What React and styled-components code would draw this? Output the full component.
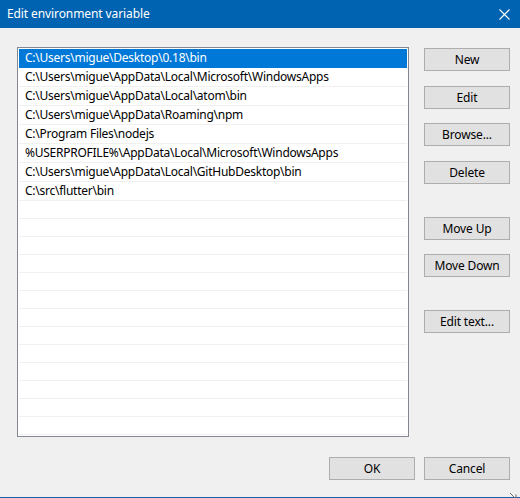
import React from 'react'
import styled, { createGlobalStyle } from 'styled-components'

const GlobalStyle = createGlobalStyle`
    html, body {
        margin: 0;
        padding: 0;
        background: #f0f0f0;
        overflow: hidden;
    }
    * {
        box-sizing: border-box;
    }
`;

const Window = styled.div`
    position: relative;
    display: flex;
    flex-direction: column;
    width: 520px;
    height: 498px;
    background: #f0f0f0;
    border-bottom: 1px solid #1a5fa8;
    font-family: "Noto Sans", "Open Sans", sans-serif;
    font-size: 12px;
    color: #000;
`;

const TitleBar = styled.div`
    display: flex;
    align-items: center;
    justify-content: space-between;
    height: 28px;
    padding: 0 6px 0 7px;
    background: #0063b1;
    color: white;
    flex-shrink: 0;
`;

const Title = styled.span`
    font-size: 12px;
    line-height: 28px;
    letter-spacing: -0.1px;
`;

const CloseBox = styled.div`
    display: flex;
    align-items: center;
    justify-content: center;
    width: 20px;
    height: 28px;
`;

const Body = styled.div`
    display: flex;
    flex-direction: column;
    flex: 1;
    padding: 19px 10px 0 17px;
`;

const Main = styled.div`
    display: flex;
    flex-direction: row;
`;

const ListBox = styled.div`
    display: flex;
    flex-direction: column;
    width: 392px;
    height: 390px;
    padding: 1px;
    background: white;
    border: 1px solid #828790;
    overflow: hidden;
`;

const Row = styled.div`
    height: 19px;
    padding: 0 0 0 6px;
    line-height: 18px;
    letter-spacing: -0.25px;
    border-bottom: 1px solid #f0f0f0;
    white-space: nowrap;
    background: ${p => (p.selected ? '#0078d7' : 'white')};
    color: ${p => (p.selected ? 'white' : '#000')};
    border-bottom-color: ${p => (p.selected ? '#0078d7' : '#f0f0f0')};
`;

const SideButtons = styled.div`
    display: flex;
    flex-direction: column;
    margin-left: 15px;
    padding-top: 1px;
`;

const Button = styled.button`
    width: 86px;
    height: 23px;
    margin-top: ${p => p.gap || 0}px;
    padding: 0;
    background: #e1e1e1;
    border: 1px solid #adadad;
    border-radius: 0;
    font-family: inherit;
    font-size: 12px;
    letter-spacing: -0.15px;
    color: #000;
`;

const Footer = styled.div`
    display: flex;
    justify-content: flex-end;
    gap: 9px;
    margin-top: 20px;
`;

const Grip = styled.div`
    position: absolute;
    right: 3px;
    bottom: 2px;
    width: 8px;
    height: 8px;
`;

const paths = [
    'C:\\Users\\migue\\Desktop\\0.18\\bin',
    'C:\\Users\\migue\\AppData\\Local\\Microsoft\\WindowsApps',
    'C:\\Users\\migue\\AppData\\Local\\atom\\bin',
    'C:\\Users\\migue\\AppData\\Roaming\\npm',
    'C:\\Program Files\\nodejs',
    '%USERPROFILE%\\AppData\\Local\\Microsoft\\WindowsApps',
    'C:\\Users\\migue\\AppData\\Local\\GitHubDesktop\\bin',
    'C:\\src\\flutter\\bin',
];

const rows = Array.from({ length: 21 }, (_, i) => paths[i] || '');

const sideButtons = [
    { label: 'New', gap: 0 },
    { label: 'Edit', gap: 15 },
    { label: 'Browse...', gap: 14 },
    { label: 'Delete', gap: 15 },
    { label: 'Move Up', gap: 33 },
    { label: 'Move Down', gap: 14 },
    { label: 'Edit text...', gap: 33 },
];

function App() {
    return (
        <>
            <GlobalStyle />
            <Window>
                <TitleBar>
                    <Title>Edit environment variable</Title>
                    <CloseBox>
                        <svg width="11" height="11" viewBox="0 0 11 11">
                            <path d="M0.5 0.5 L10.5 10.5 M10.5 0.5 L0.5 10.5" stroke="white" strokeWidth="1.1" />
                        </svg>
                    </CloseBox>
                </TitleBar>
                <Body>
                    <Main>
                        <ListBox>
                            {rows.map((text, i) => (
                                <Row key={i} selected={i === 0}>{text}</Row>
                            ))}
                        </ListBox>
                        <SideButtons>
                            {sideButtons.map(b => (
                                <Button key={b.label} gap={b.gap}>{b.label}</Button>
                            ))}
                        </SideButtons>
                    </Main>
                    <Footer>
                        <Button>OK</Button>
                        <Button>Cancel</Button>
                    </Footer>
                </Body>
                <Grip>
                    <svg width="8" height="8" viewBox="0 0 8 8">
                        <path d="M1 1 L7 7 M7 2.5 L7 7 L2.5 7" stroke="#6d6d6d" strokeWidth="1" fill="none" />
                    </svg>
                </Grip>
            </Window>
        </>
    )
}

export default App;
